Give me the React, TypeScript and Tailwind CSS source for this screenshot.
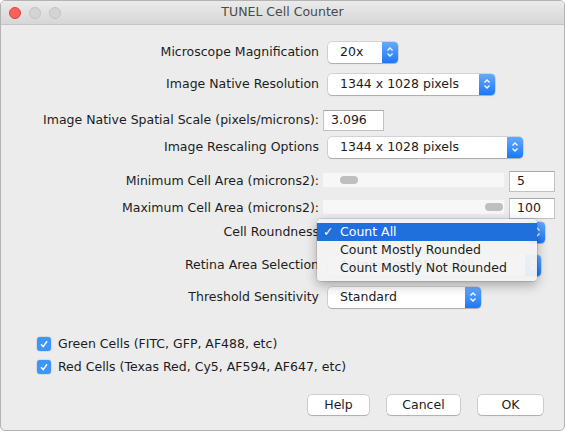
import React from "react";

const Stepper = () => (
  <div className="ml-auto flex h-full w-[16px] items-center justify-center rounded-r-[4px] bg-gradient-to-b from-[#62aafc] to-[#1977f8]">
    <svg width="8" height="12" viewBox="0 0 8 12" fill="none">
      <path d="M1.5 4.5 L4 2 L6.5 4.5" stroke="white" strokeWidth="1.3" />
      <path d="M1.5 7.5 L4 10 L6.5 7.5" stroke="white" strokeWidth="1.3" />
    </svg>
  </div>
);

const Popup = ({ value, className }: { value: string; className: string }) => (
  <div
    className={`flex h-[21px] items-center rounded-[4px] bg-white shadow-[0_0_0_0.5px_rgba(0,0,0,0.22),0_1px_1px_rgba(0,0,0,0.18)] ${className}`}
  >
    <span className="pl-[12px] whitespace-nowrap">{value}</span>
    <Stepper />
  </div>
);

const Field = ({ value, className }: { value: string; className: string }) => (
  <div
    className={`flex h-[21px] items-center border border-[#c2c2c2] border-t-[#a9a9a9] bg-white pl-[7px] ${className}`}
  >
    {value}
  </div>
);

const Slider = ({ knob }: { knob: string }) => (
  <div className="flex h-[14px] w-[181px] items-center bg-[#f7f7f7]">
    <div className={`h-[8px] w-[18px] rounded-full bg-[#bfbfbf] ${knob}`} />
  </div>
);

const Label = ({ children }: { children: React.ReactNode }) => (
  <div className="w-[318px] shrink-0 text-right whitespace-nowrap">{children}</div>
);

const Check = ({ label, className }: { label: string; className: string }) => (
  <div className={`flex h-[16px] items-center pl-[36px] ${className}`}>
    <div className="flex h-[14px] w-[14px] items-center justify-center rounded-[3px] bg-[#3d96fb] shadow-[0_0_0_0.5px_rgba(0,0,0,0.15)]">
      <svg width="10" height="10" viewBox="0 0 10 10" fill="none">
        <path d="M2 5.3 L4.2 7.6 L8 2.2" stroke="white" strokeWidth="1.5" />
      </svg>
    </div>
    <span className="ml-[7px]">{label}</span>
  </div>
);

const Button = ({ label, className }: { label: string; className: string }) => (
  <button
    className={`flex h-[20px] items-center justify-center rounded-[4px] bg-white shadow-[0_0_0_0.5px_rgba(0,0,0,0.25),0_1px_1px_rgba(0,0,0,0.15)] ${className}`}
  >
    {label}
  </button>
);

export default function App() {
  return (
    <div className="h-[432px] w-[566px] bg-white font-['DejaVu_Sans',sans-serif] text-[12.5px] text-[#1c1c1c]">
      <div className="relative flex h-[431px] w-[565px] flex-col overflow-hidden rounded-[5px] border border-[#b3b3b3] bg-[#ececec]">
        {/* title bar */}
        <div className="relative flex h-[24px] shrink-0 items-center gap-[8px] border-b border-[#c4c4c4] bg-gradient-to-b from-[#ebebeb] to-[#d6d6d6] pl-[8px]">
          <div className="h-[12px] w-[12px] rounded-full border border-[#e0443e] bg-[#fc605c]" />
          <div className="h-[12px] w-[12px] rounded-full border border-[#c3c3c3] bg-[#d4d4d4]" />
          <div className="h-[12px] w-[12px] rounded-full border border-[#c3c3c3] bg-[#d4d4d4]" />
          <div className="absolute inset-x-0 top-0 flex h-full items-center justify-center text-[#4a4a4a]">
            TUNEL Cell Counter
          </div>
        </div>

        {/* form */}
        <div className="flex flex-col">
          <div className="mt-[16px] flex h-[22px] items-center">
            <Label>Microscope Magnification</Label>
            <Popup value="20x" className="ml-[9px] w-[70px]" />
          </div>
          <div className="mt-[10px] flex h-[22px] items-center">
            <Label>Image Native Resolution</Label>
            <Popup value="1344 x 1028 pixels" className="ml-[9px] w-[167px]" />
          </div>
          <div className="mt-[14px] flex h-[22px] items-center">
            <Label>Image Native Spatial Scale (pixels/microns):</Label>
            <Field value="3.096" className="ml-[4px] w-[61px]" />
          </div>
          <div className="mt-[5px] flex h-[22px] items-center">
            <Label>Image Rescaling Options</Label>
            <Popup value="1344 x 1028 pixels" className="ml-[9px] w-[195px]" />
          </div>
          <div className="mt-[12px] flex h-[22px] items-center">
            <Label>Minimum Cell Area (microns2):</Label>
            <div className="ml-[4px] -mt-[2px]">
              <Slider knob="ml-[17px]" />
            </div>
            <Field value="5" className="ml-[5px] w-[46px]" />
          </div>
          <div className="mt-[5px] flex h-[22px] items-center">
            <Label>Maximum Cell Area (microns2):</Label>
            <div className="ml-[4px] -mt-[2px]">
              <Slider knob="ml-[162px]" />
            </div>
            <Field value="100" className="ml-[5px] w-[46px]" />
          </div>
          <div className="mt-[2px] flex h-[22px] items-center">
            <Label>Cell Roundness</Label>
            <Popup value="Count All" className="ml-[9px] w-[217px]" />
          </div>
          <div className="mt-[11px] flex h-[22px] items-center">
            <Label>Retina Area Selection</Label>
            <Popup value="Automated ONL & INL" className="ml-[9px] w-[213px]" />
          </div>
          <div className="mt-[10px] flex h-[22px] items-center">
            <Label>Threshold Sensitivity</Label>
            <Popup value="Standard" className="ml-[9px] w-[153px]" />
          </div>

          <Check label="Green Cells (FITC, GFP, AF488, etc)" className="mt-[28px]" />
          <Check label="Red Cells (Texas Red, Cy5, AF594, AF647, etc)" className="mt-[7px]" />

          <div className="mt-[20px] flex justify-end gap-[18px] pr-[21px]">
            <Button label="Help" className="w-[61px]" />
            <Button label="Cancel" className="w-[73px]" />
            <Button label="OK" className="w-[65px]" />
          </div>
        </div>

        {/* open popup menu for Cell Roundness */}
        <div className="absolute top-[218px] left-[316px] flex w-[220px] flex-col rounded-[4px] bg-[#f3f3f3]/[0.94] py-[4px] shadow-[0_0_0_0.5px_rgba(0,0,0,0.2),0_4px_12px_rgba(0,0,0,0.3)]">
          <div className="flex h-[18px] items-center bg-[#1f6fdd] text-white">
            <span className="w-[23px] pl-[6px]">✓</span>
            <span>Count All</span>
          </div>
          <div className="flex h-[18px] items-center">
            <span className="w-[23px]" />
            <span>Count Mostly Rounded</span>
          </div>
          <div className="flex h-[18px] items-center">
            <span className="w-[23px]" />
            <span>Count Mostly Not Rounded</span>
          </div>
        </div>
      </div>
    </div>
  );
}
